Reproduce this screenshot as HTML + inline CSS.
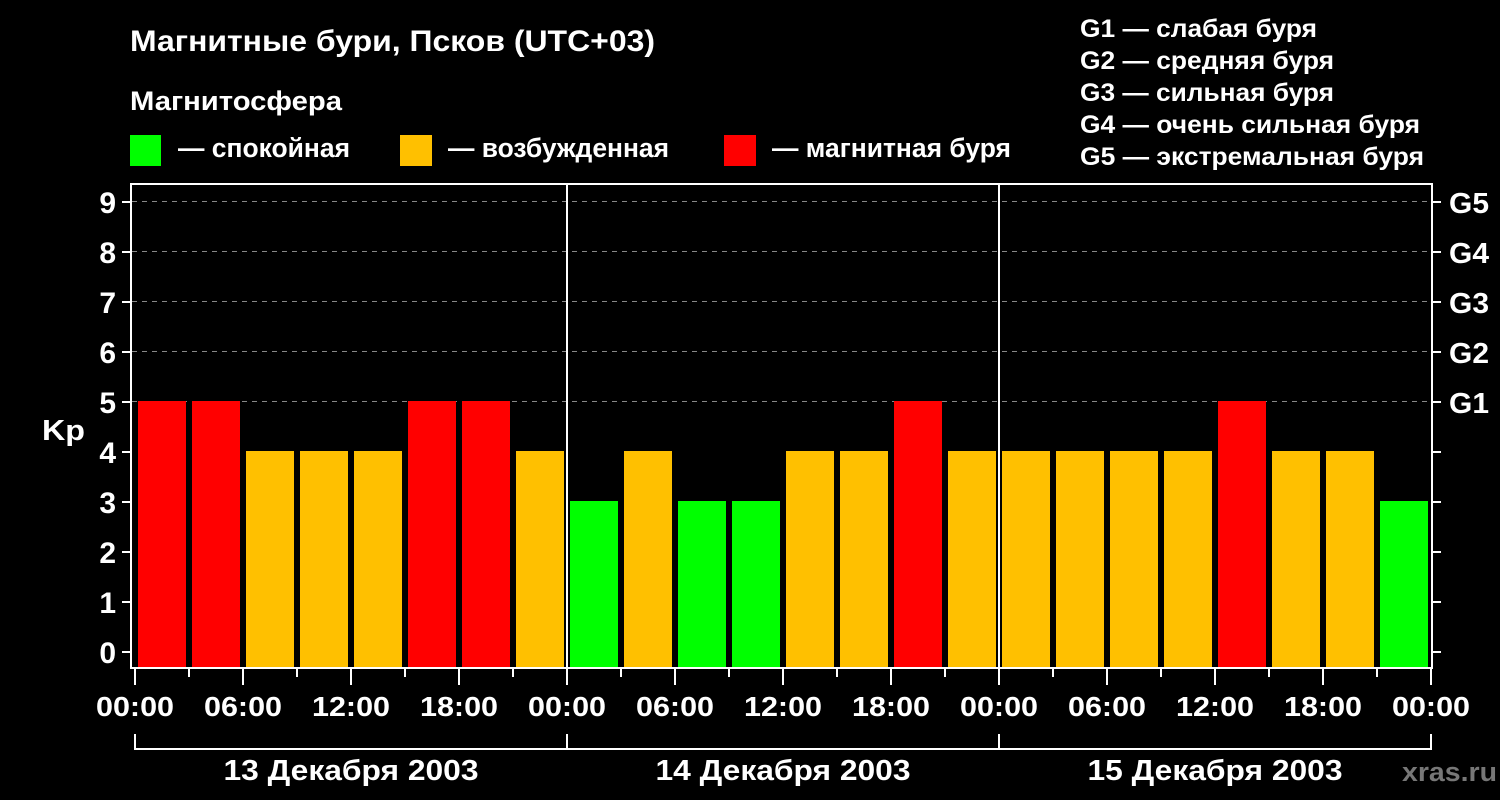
<!DOCTYPE html>
<html><head><meta charset="utf-8"><style>
html,body{margin:0;padding:0;background:#000;}
svg{display:block;}
text{font-family:"Liberation Sans",Arial,sans-serif;font-weight:bold;fill:#fff;}
</style></head><body>
<svg width="1500" height="800" viewBox="0 0 1500 800" xmlns="http://www.w3.org/2000/svg">
<rect width="1500" height="800" fill="#000"/>
<text x="130" y="51" font-size="30" textLength="525" lengthAdjust="spacingAndGlyphs">Магнитные бури, Псков (UTC+03)</text>
<text x="130" y="110" font-size="27" textLength="212" lengthAdjust="spacingAndGlyphs">Магнитосфера</text>
<rect x="130" y="135" width="31" height="31" fill="#00ff00"/>
<text x="178" y="157" font-size="27" textLength="172" lengthAdjust="spacingAndGlyphs">— спокойная</text>
<rect x="400" y="135" width="32" height="31" fill="#ffc000"/>
<text x="448" y="157" font-size="27" textLength="221" lengthAdjust="spacingAndGlyphs">— возбужденная</text>
<rect x="724" y="135" width="32" height="31" fill="#ff0000"/>
<text x="772" y="157" font-size="27" textLength="239" lengthAdjust="spacingAndGlyphs">— магнитная буря</text>
<g font-size="25">
<text x="1080" y="37" textLength="237" lengthAdjust="spacingAndGlyphs">G1 — слабая буря</text>
<text x="1080" y="69" textLength="254" lengthAdjust="spacingAndGlyphs">G2 — средняя буря</text>
<text x="1080" y="101" textLength="254" lengthAdjust="spacingAndGlyphs">G3 — сильная буря</text>
<text x="1080" y="133" textLength="340" lengthAdjust="spacingAndGlyphs">G4 — очень сильная буря</text>
<text x="1080" y="165" textLength="344" lengthAdjust="spacingAndGlyphs">G5 — экстремальная буря</text>
</g>
<g stroke="#888" stroke-width="1" stroke-dasharray="5,5">
<line x1="132" y1="201.5" x2="1432" y2="201.5"/>
<line x1="132" y1="251.5" x2="1432" y2="251.5"/>
<line x1="132" y1="301.5" x2="1432" y2="301.5"/>
<line x1="132" y1="351.5" x2="1432" y2="351.5"/>
<line x1="132" y1="401.5" x2="1432" y2="401.5"/>
</g>
<g>
<rect x="138" y="401" width="48" height="266" fill="#ff0000"/>
<rect x="192" y="401" width="48" height="266" fill="#ff0000"/>
<rect x="246" y="451" width="48" height="216" fill="#ffc000"/>
<rect x="300" y="451" width="48" height="216" fill="#ffc000"/>
<rect x="354" y="451" width="48" height="216" fill="#ffc000"/>
<rect x="408" y="401" width="48" height="266" fill="#ff0000"/>
<rect x="462" y="401" width="48" height="266" fill="#ff0000"/>
<rect x="516" y="451" width="48" height="216" fill="#ffc000"/>
<rect x="570" y="501" width="48" height="166" fill="#00ff00"/>
<rect x="624" y="451" width="48" height="216" fill="#ffc000"/>
<rect x="678" y="501" width="48" height="166" fill="#00ff00"/>
<rect x="732" y="501" width="48" height="166" fill="#00ff00"/>
<rect x="786" y="451" width="48" height="216" fill="#ffc000"/>
<rect x="840" y="451" width="48" height="216" fill="#ffc000"/>
<rect x="894" y="401" width="48" height="266" fill="#ff0000"/>
<rect x="948" y="451" width="48" height="216" fill="#ffc000"/>
<rect x="1002" y="451" width="48" height="216" fill="#ffc000"/>
<rect x="1056" y="451" width="48" height="216" fill="#ffc000"/>
<rect x="1110" y="451" width="48" height="216" fill="#ffc000"/>
<rect x="1164" y="451" width="48" height="216" fill="#ffc000"/>
<rect x="1218" y="401" width="48" height="266" fill="#ff0000"/>
<rect x="1272" y="451" width="48" height="216" fill="#ffc000"/>
<rect x="1326" y="451" width="48" height="216" fill="#ffc000"/>
<rect x="1380" y="501" width="48" height="166" fill="#00ff00"/>
</g>
<g stroke="#fff" stroke-width="2" fill="none">
<rect x="131" y="184" width="1301" height="484"/>
<line x1="567" y1="184" x2="567" y2="668"/>
<line x1="999" y1="184" x2="999" y2="668"/>
</g>
<g stroke="#fff" stroke-width="2">
<line x1="122" y1="652" x2="131" y2="652"/><line x1="122" y1="602" x2="131" y2="602"/>
<line x1="122" y1="552" x2="131" y2="552"/><line x1="122" y1="502" x2="131" y2="502"/>
<line x1="122" y1="452" x2="131" y2="452"/><line x1="122" y1="402" x2="131" y2="402"/>
<line x1="122" y1="352" x2="131" y2="352"/><line x1="122" y1="302" x2="131" y2="302"/>
<line x1="122" y1="252" x2="131" y2="252"/><line x1="122" y1="202" x2="131" y2="202"/>
<line x1="1432" y1="652" x2="1441" y2="652"/><line x1="1432" y1="602" x2="1441" y2="602"/>
<line x1="1432" y1="552" x2="1441" y2="552"/><line x1="1432" y1="502" x2="1441" y2="502"/>
<line x1="1432" y1="452" x2="1441" y2="452"/><line x1="1432" y1="402" x2="1441" y2="402"/>
<line x1="1432" y1="352" x2="1441" y2="352"/><line x1="1432" y1="302" x2="1441" y2="302"/>
<line x1="1432" y1="252" x2="1441" y2="252"/><line x1="1432" y1="202" x2="1441" y2="202"/>
</g>
<g font-size="30" text-anchor="end">
<text x="116" y="663">0</text><text x="116" y="613">1</text><text x="116" y="563">2</text>
<text x="116" y="513">3</text><text x="116" y="463">4</text><text x="116" y="413">5</text>
<text x="116" y="363">6</text><text x="116" y="313">7</text><text x="116" y="263">8</text>
<text x="116" y="213">9</text>
</g>
<text x="42" y="440" font-size="29" textLength="43" lengthAdjust="spacingAndGlyphs">Kp</text>
<g font-size="29">
<text x="1449" y="413" textLength="40" lengthAdjust="spacingAndGlyphs">G1</text>
<text x="1449" y="363" textLength="40" lengthAdjust="spacingAndGlyphs">G2</text>
<text x="1449" y="313" textLength="40" lengthAdjust="spacingAndGlyphs">G3</text>
<text x="1449" y="263" textLength="40" lengthAdjust="spacingAndGlyphs">G4</text>
<text x="1449" y="213" textLength="40" lengthAdjust="spacingAndGlyphs">G5</text>
</g>
<g stroke="#fff" stroke-width="2">
<line x1="135" y1="668" x2="135" y2="685"/><line x1="189" y1="668" x2="189" y2="677"/>
<line x1="243" y1="668" x2="243" y2="685"/><line x1="297" y1="668" x2="297" y2="677"/>
<line x1="351" y1="668" x2="351" y2="685"/><line x1="405" y1="668" x2="405" y2="677"/>
<line x1="459" y1="668" x2="459" y2="685"/><line x1="513" y1="668" x2="513" y2="677"/>
<line x1="567" y1="668" x2="567" y2="685"/><line x1="621" y1="668" x2="621" y2="677"/>
<line x1="675" y1="668" x2="675" y2="685"/><line x1="729" y1="668" x2="729" y2="677"/>
<line x1="783" y1="668" x2="783" y2="685"/><line x1="837" y1="668" x2="837" y2="677"/>
<line x1="891" y1="668" x2="891" y2="685"/><line x1="945" y1="668" x2="945" y2="677"/>
<line x1="999" y1="668" x2="999" y2="685"/><line x1="1053" y1="668" x2="1053" y2="677"/>
<line x1="1107" y1="668" x2="1107" y2="685"/><line x1="1161" y1="668" x2="1161" y2="677"/>
<line x1="1215" y1="668" x2="1215" y2="685"/><line x1="1269" y1="668" x2="1269" y2="677"/>
<line x1="1323" y1="668" x2="1323" y2="685"/><line x1="1377" y1="668" x2="1377" y2="677"/>
<line x1="1431" y1="668" x2="1431" y2="685"/>
</g>
<g font-size="28" text-anchor="middle">
<text x="135" y="716" textLength="78" lengthAdjust="spacingAndGlyphs">00:00</text>
<text x="243" y="716" textLength="78" lengthAdjust="spacingAndGlyphs">06:00</text>
<text x="351" y="716" textLength="78" lengthAdjust="spacingAndGlyphs">12:00</text>
<text x="459" y="716" textLength="78" lengthAdjust="spacingAndGlyphs">18:00</text>
<text x="567" y="716" textLength="78" lengthAdjust="spacingAndGlyphs">00:00</text>
<text x="675" y="716" textLength="78" lengthAdjust="spacingAndGlyphs">06:00</text>
<text x="783" y="716" textLength="78" lengthAdjust="spacingAndGlyphs">12:00</text>
<text x="891" y="716" textLength="78" lengthAdjust="spacingAndGlyphs">18:00</text>
<text x="999" y="716" textLength="78" lengthAdjust="spacingAndGlyphs">00:00</text>
<text x="1107" y="716" textLength="78" lengthAdjust="spacingAndGlyphs">06:00</text>
<text x="1215" y="716" textLength="78" lengthAdjust="spacingAndGlyphs">12:00</text>
<text x="1323" y="716" textLength="78" lengthAdjust="spacingAndGlyphs">18:00</text>
<text x="1431" y="716" textLength="78" lengthAdjust="spacingAndGlyphs">00:00</text>
</g>
<g stroke="#fff" stroke-width="2" fill="none">
<path d="M135 734 V749 H1431 V734"/>
<line x1="567" y1="734" x2="567" y2="749"/>
<line x1="999" y1="734" x2="999" y2="749"/>
</g>
<g font-size="29" text-anchor="middle">
<text x="351" y="780" textLength="255" lengthAdjust="spacingAndGlyphs">13 Декабря 2003</text>
<text x="783" y="780" textLength="255" lengthAdjust="spacingAndGlyphs">14 Декабря 2003</text>
<text x="1215" y="780" textLength="255" lengthAdjust="spacingAndGlyphs">15 Декабря 2003</text>
</g>
<text x="1402" y="781" font-size="27" textLength="95" lengthAdjust="spacingAndGlyphs" style="fill:#777">xras.ru</text>
</svg>
</body></html>
